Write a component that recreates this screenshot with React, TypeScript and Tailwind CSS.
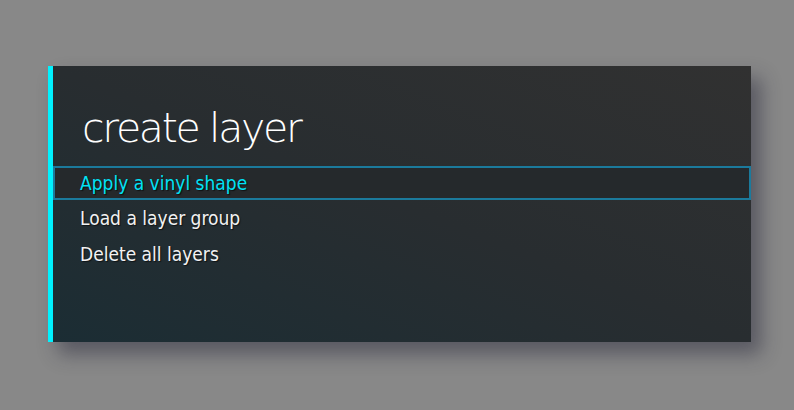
const items = ["Apply a vinyl shape", "Load a layer group", "Delete all layers"];

export default function App() {
  return (
    <div className="h-[410px] w-[794px] bg-[#888888] pl-[48px] pt-[66px]">
      <div className="flex h-[276px] w-[703px] bg-gradient-to-tr from-[#1b2d34] via-[#282d30] to-[#313131] shadow-[10px_12px_18px_rgba(30,30,50,0.45)]">
        <div className="w-[5px] shrink-0 bg-[#00f2ff]" />
        <div className="flex-1">
          <h1
            className="pl-[29px] pt-[30px] text-[41px] font-extralight leading-[64px] tracking-[-2.3px] text-white"
            style={{ fontFamily: '"DejaVu Sans", sans-serif' }}
          >
            create layer
          </h1>
          <ul className="mt-[6px] space-y-[1px]" style={{ fontFamily: '"DejaVu Sans", sans-serif' }}>
            {items.map((item, i) => (
              <li
                key={item}
                className={
                  i === 0
                    ? "flex h-[34px] items-center border-2 border-[#1b7a9c] bg-[#25292c] pl-[25px] text-[19px] text-[#00e1f5] font-stretch-condensed [text-shadow:1px_1px_1px_rgba(0,0,0,0.6)]"
                    : "flex h-[35px] items-center pl-[27px] text-[19px] text-[#f2f2f2] font-stretch-condensed [text-shadow:1px_1px_1px_rgba(0,0,0,0.6)]"
                }
              >
                {item}
              </li>
            ))}
          </ul>
        </div>
      </div>
    </div>
  );
}
